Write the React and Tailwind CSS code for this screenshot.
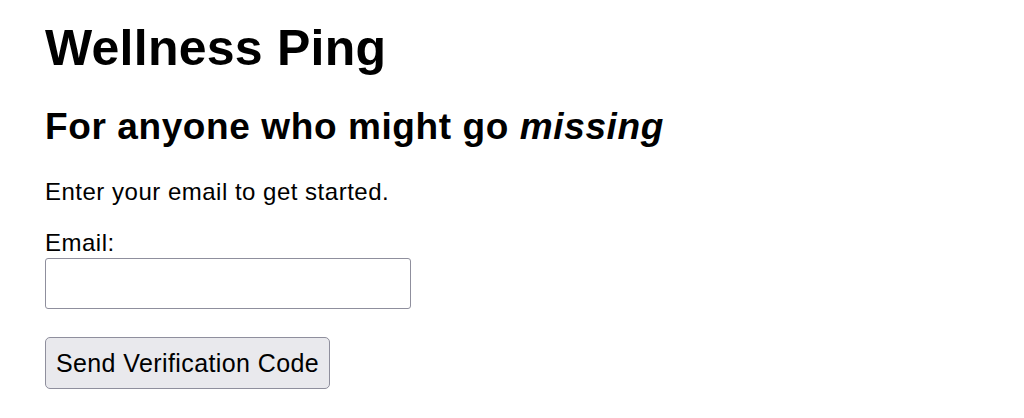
export default function App() {
  return (
    <div className="px-[45px] pt-[19px] font-['Liberation_Sans',Arial,sans-serif] text-black bg-white min-h-[418px]">
      <h1 className="text-[50px] leading-[58px] font-bold tracking-[0.25px]">Wellness Ping</h1>
      <h2 className="mt-[29px] text-[37px] leading-[42px] font-bold tracking-[0.6px]">
        For anyone who might go <em className="italic">missing</em>
      </h2>
      <p className="mt-[30px] text-[24px] leading-[28px] tracking-[0.5px]">Enter your email to get started.</p>
      <label className="block mt-[23px] text-[24px] leading-[28px] tracking-[0.5px]">Email:</label>
      <input
        type="email"
        className="block mt-[1px] w-[366px] h-[51px] border border-[#8f8f9d] rounded-[3px] bg-white outline-none"
      />
      <button className="mt-[28px] w-[285px] h-[52px] border border-[#8f8f9d] rounded-[5px] bg-[#e9e9ed] text-[25px] leading-[28px] tracking-[0.4px] text-black">
        Send Verification Code
      </button>
    </div>
  );
}
